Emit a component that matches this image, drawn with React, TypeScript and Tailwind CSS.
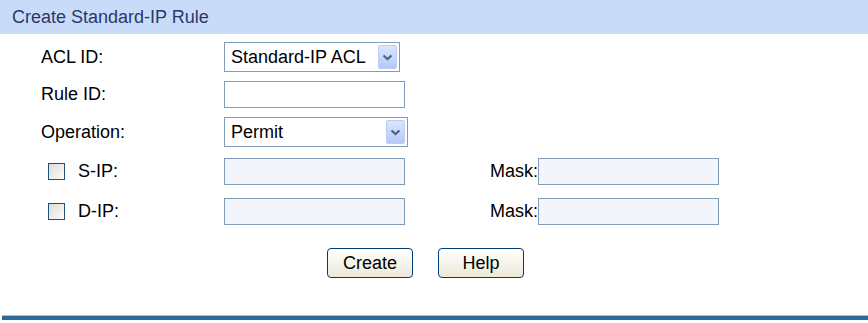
import React from "react";

const font = { fontFamily: '"Liberation Sans", Arial, sans-serif' };

function Chevron() {
  return (
    <svg width="11" height="7" viewBox="0 0 11 7">
      <path d="M1.5 1.5 L5.5 5 L9.5 1.5" fill="none" stroke="#4d6185" strokeWidth="2.2" />
    </svg>
  );
}

function FakeSelect({ value, width }: { value: string; width: string }) {
  return (
    <div
      className={`flex h-[30px] ${width} items-center border border-[#7f9db9] bg-white pl-[6px] pr-[2px] text-[18px] text-black`}
    >
      <span className="flex-1 truncate">{value}</span>
      <span className="flex h-[24px] w-[19px] items-center justify-center rounded-[2px] border border-[#b9cdf5] bg-gradient-to-b from-[#dbe6fd] to-[#b4c9f7]">
        <Chevron />
      </span>
    </div>
  );
}

function TextBox({ disabled }: { disabled?: boolean }) {
  return (
    <div
      className={`h-[27px] w-[181px] border border-[#7f9db9] ${
        disabled ? "bg-[#f4f5fb]" : "bg-white"
      }`}
    />
  );
}

function CheckBox() {
  return (
    <span className="mr-[13px] inline-block h-[17px] w-[17px] border border-[#1c5180] bg-gradient-to-br from-[#dcdcd7] to-[#fbfbf9]" />
  );
}

function Btn({ label }: { label: string }) {
  return (
    <button
      className="h-[30px] w-[86px] rounded-[4px] border border-[#003c74] bg-gradient-to-b from-white to-[#ece9d8] text-[18px] text-black"
      style={font}
    >
      {label}
    </button>
  );
}

export default function App() {
  return (
    <div className="h-[323px] w-[868px] bg-white" style={font}>
      {/* 헤더 */}
      <div className="flex h-[34px] items-center bg-[#c8dcfa] pl-[12px] text-[18px] text-[#2b376b]">
        Create Standard-IP Rule
      </div>

      <div className="flex flex-col text-[18px] text-black">
        <div className="mt-[8px] flex h-[30px] items-center">
          <div className="w-[224px] pl-[41px]">ACL ID:</div>
          <FakeSelect value="Standard-IP ACL" width="w-[176px]" />
        </div>
        <div className="mt-[9px] flex h-[27px] items-center">
          <div className="w-[224px] pl-[41px]">Rule ID:</div>
          <TextBox />
        </div>
        <div className="mt-[9px] flex h-[30px] items-center">
          <div className="w-[224px] pl-[41px]">Operation:</div>
          <FakeSelect value="Permit" width="w-[184px]" />
        </div>

        {/* S-IP / D-IP */}
        <div className="mt-[11px] flex h-[27px] items-center">
          <div className="flex w-[224px] items-center pl-[48px]">
            <CheckBox />
            S-IP:
          </div>
          <TextBox disabled />
          <div className="w-[133px] text-right">Mask:</div>
          <TextBox disabled />
        </div>
        <div className="mt-[13px] flex h-[27px] items-center">
          <div className="flex w-[224px] items-center pl-[48px]">
            <CheckBox />
            D-IP:
          </div>
          <TextBox disabled />
          <div className="w-[133px] text-right">Mask:</div>
          <TextBox disabled />
        </div>

        <div className="mt-[23px] flex h-[30px] items-center justify-center gap-[25px] pr-[17px]">
          <Btn label="Create" />
          <Btn label="Help" />
        </div>
      </div>

      <div className="mt-[37px] ml-[2px] h-[5px] border-t border-[#a9c1d4] bg-[#2f6a96]" />
    </div>
  );
}
